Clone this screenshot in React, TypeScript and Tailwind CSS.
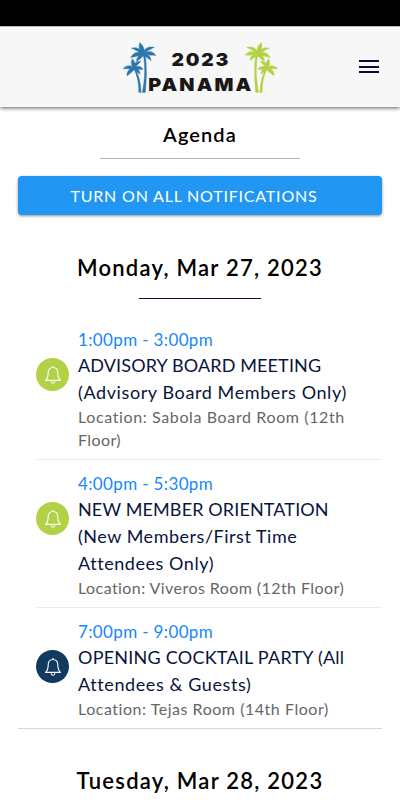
import React from 'react';
import clsx from 'clsx';

interface Session {
  time: string;
  title: { text: string; tracking: string }[];
  location: { text: string; tracking: string }[];
  color: string;
}

interface PalmsProps {
  className?: string;
}

const sessions: Session[] = [
  {
    time: '1:00pm - 3:00pm',
    title: [
      { text: 'ADVISORY BOARD MEETING', tracking: 'tracking-[0.13px]' },
      { text: '(Advisory Board Members Only)', tracking: 'tracking-[0.6px]' },
    ],
    location: [
      { text: 'Location: Sabola Board Room (12th', tracking: 'tracking-[0.62px]' },
      { text: 'Floor)', tracking: 'tracking-[0.4px]' },
    ],
    color: 'bg-[#b2d144]',
  },
  {
    time: '4:00pm - 5:30pm',
    title: [
      { text: 'NEW MEMBER ORIENTATION', tracking: 'tracking-[0.13px]' },
      { text: '(New Members/First Time', tracking: 'tracking-[0.52px]' },
      { text: 'Attendees Only)', tracking: 'tracking-[0.55px]' },
    ],
    location: [{ text: 'Location: Viveros Room (12th Floor)', tracking: 'tracking-[0.43px]' }],
    color: 'bg-[#b2d144]',
  },
  {
    time: '7:00pm - 9:00pm',
    title: [
      { text: 'OPENING COCKTAIL PARTY (All', tracking: 'tracking-[0.23px]' },
      { text: 'Attendees & Guests)', tracking: 'tracking-[0.6px]' },
    ],
    location: [{ text: 'Location: Tejas Room (14th Floor)', tracking: 'tracking-[0.53px]' }],
    color: 'bg-[#123a5e]',
  },
];

const Palms: React.FC<PalmsProps> = ({ className }) => (
  <svg
    viewBox="122 40 36 53"
    className={clsx('h-[53px] w-9 shrink-0', className)}
    fill="currentColor"
    stroke="currentColor"
    strokeWidth="0.400"
  >
    {/* tall palm */}
    <path d="M143.300 54c2.200 12 1.700 24-1 37.400h3c1.300-13.500 1.700-25.300 0-37.400z" />
    <path d="M142.500 54c-3.500-4-4-8-2.700-12.500 3.500 3 5 7 4.400 12.500z" />
    <path d="M142.500 54c-1.500-6-5.500-8.500-11.300-6.700 2.500.3 2.800 1.500 4.800 2 1.500.5 4 2.500 6.500 4.700z" />
    <path d="M143 53.500c.5-6 5-8.500 11.500-7.200-2.300.5-2.500 1.700-4.300 2.200-2 .7-4.500 2.500-7.200 5z" />
    <path d="M143 53c4-3.500 9.500-3.500 13 1.500-2-.9-3.200.2-5-.3-2.500-.2-5-.2-8-1.200z" />
    <path d="M143 53c4.500-.5 8 2 8 6.700-1.200-1.600-2.500-1.500-3.500-2.700-1.500-1-3-2-4.500-4z" />
    <path d="M144 53c-4-3-10.500-2.500-13.500 3.900 2-1.400 3.500-.7 5.200-1.500 3-.4 5.500-1 8.300-2.400z" />
    <path d="M144.500 53c-4.500 0-8 2.500-8 7.300 1.500-1.300 3-1.500 4-2.800 1.500-1.200 3.200-2.500 4-4.500z" />
    {/* short palm */}
    <path d="M133.800 67.500c3.500 7 5.200 15 5 23.900h2.300c-.2-9-2.200-17.300-5.800-23.900z" />
    <path d="M133.500 67c-2.700-3-2.700-6-1.200-9.300 2.500 2.500 3.500 5.500 2.500 9.300z" />
    <path d="M133.500 67.500c-.5-4.500 2.500-7.500 7.500-7.500-1.400.8-1.500 2-2.500 3-1.500 1.300-3 2.500-5 4.500z" />
    <path d="M133.500 67c3-2.700 7.500-2.200 9.700 1.300-1.500-.4-2.500.4-4 .1-2 .1-4-.2-5.700-1.400z" />
    <path d="M133.500 66.500c4 .5 6.500 3 6.700 6.700-1.200-1-2-1.300-3-2.200-1.400-1.200-3-2.400-3.700-4.500z" />
    <path d="M134.500 67.500c-2.500-3.700-8-4-11.500.4 1.700-.7 3 .2 4.500-.1 2.300.4 4.700.7 7-.3z" />
    <path d="M135 66.500c-5 .5-8.500 3.500-8 8.500 1.300-1.500 2.700-1.700 3.700-3 1.700-1.500 3.800-3 4.300-5.500z" />
  </svg>
);

const Bell: React.FC = () => (
  <svg
    viewBox="0 0 18 20"
    className="h-5 w-[18px]"
    fill="none"
    stroke="white"
    strokeWidth="1.100"
    strokeLinejoin="round"
    strokeLinecap="round"
  >
    <path d="M9 2.500c-3 0-4.800 2.200-4.800 5.200 0 4.500-.5 5.700-2.700 7.700h15c-2.200-2-2.700-3.200-2.700-7.700 0-3-1.800-5.200-4.800-5.200z" />
    <path d="M9 1.200v1.200M7.200 16.600c.3 1.200.9 1.600 1.800 1.600s1.500-.4 1.800-1.600" />
  </svg>
);

const SessionRow: React.FC<{ session: Session; last: boolean }> = ({ session, last }) => (
  <li
    className={clsx(
      'flex pt-[11px] pb-2',
      last ? 'border-b border-[#d5d7d7] pl-[18px]' : 'ml-[18px] border-b border-[#ececec]'
    )}
  >
    <button
      className={clsx(
        'mt-[31px] flex h-[33px] w-[33px] shrink-0 items-center justify-center rounded-full',
        session.color
      )}
    >
      <Bell />
    </button>
    <div className="ml-[9px] whitespace-nowrap">
      <p className="text-[17px] leading-[25px] tracking-[0.36px] text-[#1687fa]">{session.time}</p>
      <h3 className="text-[18px] leading-[27px] text-[#09143c]">
        {session.title.map((line) => (
          <span key={line.text} className={clsx('block', line.tracking)}>{line.text}</span>
        ))}
      </h3>
      <p className="-mt-px text-[16px] leading-[23px] text-[#666]">
        {session.location.map((line) => (
          <span key={line.text} className={clsx('block', line.tracking)}>{line.text}</span>
        ))}
      </p>
    </div>
  </li>
);

const App: React.FC = () => (
  <div className="h-[800px] w-[400px] overflow-hidden bg-white font-['Lato',sans-serif]">
    <div className="h-[26px] bg-black" />
    <header className="relative flex h-[81px] items-center justify-center border-t border-[#bbb] bg-[#f7f7f7] shadow-[0_1px_4px_rgba(0,0,0,0.65)]">
      <div className="ml-px flex h-[53px] w-[157px] justify-between">
        <Palms className="text-[#2a77ae]" />
        <div className="-mr-[14px] -ml-[14px] flex origin-center scale-x-110 flex-col items-center pt-[8px] font-['Inter',sans-serif] font-black whitespace-nowrap text-[#1a1719]">
          <div className="text-[17.500px] leading-[22px] tracking-[1.6px]">2023</div>
          <div className="mt-[3px] text-[18px] leading-[22px] tracking-[1.9px]">PANAMA</div>
        </div>
        <Palms className="-scale-x-100 text-[#b2d144]" />
      </div>
      <button className="absolute top-[33px] right-[21px] flex w-5 flex-col gap-[3.500px]">
        <span className="h-[2px] bg-[#09093c]" />
        <span className="h-[2px] bg-[#09093c]" />
        <span className="h-[2px] bg-[#09093c]" />
      </button>
    </header>

    <main className="px-[18px]">
      <h1 className="pt-[13px] text-center text-[20px] leading-7 font-semibold tracking-[1.1px] text-black">Agenda</h1>
      <hr className="mx-auto mt-[10px] w-[200px] border-[#b3b3b3]" />
      <button className="mt-[17px] h-[39px] w-full rounded-[4px] bg-[#2196f3] pr-[12px] text-[16px] tracking-[0.8px] text-white shadow-[0_1px_3px_rgba(0,0,0,0.45)]">
        TURN ON ALL NOTIFICATIONS
      </button>
      <h2 className="mt-[37px] text-center text-[22px] leading-8 font-semibold tracking-[1.250px] text-black">
        Monday, Mar 27, 2023
      </h2>
      <hr className="mx-auto mt-[14px] w-[122px] border-[#09143c]" />
      <ul className="mt-[17px]">
        {sessions.map((session, i) => (
          <SessionRow key={session.time} session={session} last={i === sessions.length - 1} />
        ))}
      </ul>
      <h2 className="mt-[36px] text-center text-[22px] leading-8 font-semibold tracking-[1.250px] text-black">
        Tuesday, Mar 28, 2023
      </h2>
    </main>
  </div>
);

export default App;
